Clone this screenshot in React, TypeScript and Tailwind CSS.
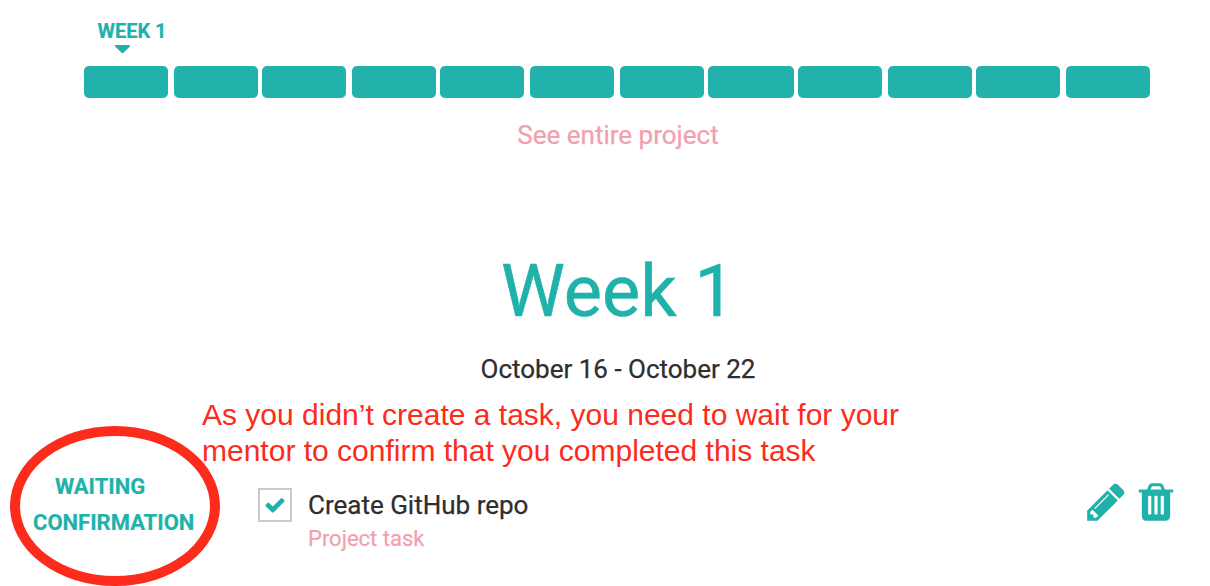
const segments = [
  'w-[84px] mr-[6px]', 'w-[84px] mr-[4px]', 'w-[84px] mr-[6px]', 'w-[84px] mr-[4px]',
  'w-[84px] mr-[6px]', 'w-[84px] mr-[6px]', 'w-[84px] mr-[4px]', 'w-[86px] mr-[4px]',
  'w-[84px] mr-[6px]', 'w-[84px] mr-[4px]', 'w-[84px] mr-[6px]', 'w-[84px]',
];

const CHECK =
  'M1671 566q0 40-28 68l-724 724-136 136q-28 28-68 28t-68-28l-136-136-362-362q-28-28-28-68t28-68l136-136q28-28 68-28t68 28l294 295 656-657q28-28 68-28t68 28l136 136q28 28 28 68z';
const PENCIL =
  'M491 1536l91-91-235-235-91 91v107h128v128h107zm523-928q0-22-22-22-10 0-17 7l-542 542q-7 7-7 17 0 22 22 22 10 0 17-7l542-542q7-7 7-17zm-54-192l416 416-832 832h-416v-416zm683 96q0 53-37 90l-166 166-416-416 166-165q36-38 90-38 53 0 91 38l235 234q37 39 37 91z';
const TRASH =
  'M704 1376v-704q0-14-9-23t-23-9h-64q-14 0-23 9t-9 23v704q0 14 9 23t23 9h64q14 0 23-9t9-23zm256 0v-704q0-14-9-23t-23-9h-64q-14 0-23 9t-9 23v704q0 14 9 23t23 9h64q14 0 23-9t9-23zm256 0v-704q0-14-9-23t-23-9h-64q-14 0-23 9t-9 23v704q0 14 9 23t23 9h64q14 0 23-9t9-23zm-544-992h448l-48-117q-7-9-17-11h-317q-10 2-17 11zm928 32v64q0 14-9 23t-23 9h-96v948q0 83-47 143.5t-113 60.5h-832q-66 0-113-58.5t-47-141.5v-952h-96q-14 0-23-9t-9-23v-64q0-14 9-23t23-9h309l70-167q15-37 54-63t79-26h320q40 0 79 26t54 63l70 167h309q14 0 23 9t9 23z';

function Icon({ path, className }: { path: string; className: string }) {
  return (
    <svg viewBox="0 0 1792 1792" className={className} fill="currentColor" aria-hidden="true">
      <path d={path} />
    </svg>
  );
}

function Timeline() {
  return (
    <header className="pl-[84px]">
      <div className="flex h-[66px] w-[76px] flex-col items-center pt-[19px]">
        <span className="ml-[20px] text-[20px] leading-[24px] font-bold whitespace-nowrap text-[#20b2aa] [-webkit-text-stroke:0.2px]">WEEK 1</span>
        <svg viewBox="0 0 16 9" className="mt-[2px] h-[9px] w-[16px] text-[#20b2aa]" fill="currentColor" aria-hidden="true">
          <path d="M1.5 0h14q1 .7.4 1.4L9.5 7.8q-1 .9-2 0L1.1 1.4Q.5 .7 1.5 0z" />
        </svg>
      </div>
      <div className="flex">
        {segments.map((size, i) => (
          <div key={i} className={`h-8 shrink-0 rounded-[5px] bg-[#22b1ab] ${size}`} />
        ))}
      </div>
    </header>
  );
}

function TaskRow() {
  return (
    <div className="flex h-[118px] items-start">
      <div className="flex w-[258px] shrink-0 flex-col pt-px text-[22px] leading-[36px] font-bold whitespace-nowrap text-[#20b2aa] [-webkit-text-stroke:0.2px]">
        <span className="pl-[55px]">WAITING</span>
        <span className="pl-[33px]">CONFIRMATION</span>
      </div>
      <div className="mt-[20px] flex size-[34px] shrink-0 items-center justify-center border-2 border-[#cacaca]">
        <Icon path={CHECK} className="size-[22px] text-[#20b2aa]" />
      </div>
      <div className="ml-[16px] grow pt-[20px] [-webkit-text-stroke:0.25px]">
        <div className="text-[26px] leading-[34px] text-[#2e2e2e]">Create GitHub repo</div>
        <div className="mt-[4px] text-[22px] leading-[26px] text-[#f2a0ae]">Project task</div>
      </div>
      <div className="mt-[12px] mr-[32px] flex gap-[6px] text-[#20b2aa]">
        <Icon path={PENCIL} className="size-[44px]" />
        <Icon path={TRASH} className="size-[44px]" />
      </div>
    </div>
  );
}

export default function App() {
  return (
    <main className="relative h-[586px] w-[1210px] overflow-hidden bg-white font-['Roboto',sans-serif]">
      <Timeline />
      <section className="flex flex-col pl-[26px] text-center [-webkit-text-stroke:0.25px]">
        <a className="mt-[20px] text-[26px] leading-[34px] text-[#f2a0ae]">See entire project</a>
        <h1 className="mt-[95px] h-[90px] text-[72px] leading-[90px] text-[#20b2aa] [-webkit-text-stroke:0.5px]">Week 1</h1>
        <p className="mt-[15px] mb-[82px] h-[34px] text-[26px] leading-[34px] text-[#2e2e2e]">October 16 - October 22</p>
      </section>
      <TaskRow />
      <p className="absolute top-[397px] left-[202px] font-['Liberation_Sans',Arial,sans-serif] text-[30px] leading-[36px] whitespace-nowrap text-[#fc2b1c]">
        As you didn’t create a task, you need to wait for your
        <br />
        mentor to confirm that you completed this task
      </p>
      <div className="absolute top-[426px] left-[10px] h-[160px] w-[210px] rounded-[50%] border-[10px] border-[#fc2b1c]" />
    </main>
  );
}
